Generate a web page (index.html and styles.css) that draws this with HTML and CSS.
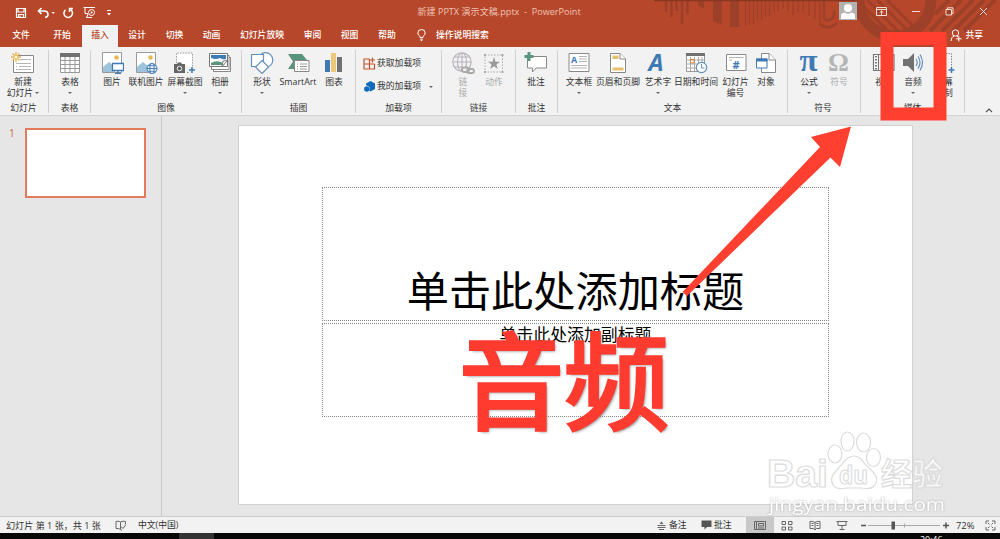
FILE: index.html
```
<!DOCTYPE html>
<html lang="zh-CN">
<head>
<meta charset="utf-8">
<title>新建 PPTX 演示文稿.pptx - PowerPoint</title>
<link rel="stylesheet" href="styles.css">
</head>
<body>
<div class="app">
  <header class="header">
    <svg class="header-art" width="350" height="47" viewBox="0 0 350 47" fill="none" stroke="#9c4029">
      <path d="M16 0V12M21.500 0V17M26.500 0V11M32 0V24M37.500 0V14" stroke-width="2.500"/>
      <path d="M48 0V5L54 9V0ZM63 0V21L72 25V0ZM80 0V27H89V0Z" fill="#9c4029" stroke="none"/>
      <path d="M95.500 0V26M99.500 0V25M103.500 0V24M107.500 0V21M111.500 0V20M115.500 0V17M119.500 0V16M124 0V13M128 0V11M133 0V9M138 0V11M143 0V15M148 0V13M153 0V12M159 0V16M165 0V19M170 2V26" stroke-width="1.300"/>
      <path d="M174 0V17Q174 21 179 20Q186 18 184 10M170 24Q178 31 187 23" stroke-width="2.500"/>
      <circle cx="245" cy="0" r="36" stroke-width="11"/>
      <path d="M207 0L242 35M217 0L253 36M227 0L258 31M237 0L264 27" stroke-width="3"/>
      <path d="M299 0L285 14M311 0L280 31M323 0L292 31M334 0L303 31M345 0L314 31" stroke-width="4"/>
      <path d="M4 0H205V1.200H4Z" fill="#873722" stroke="none"/>
    </svg>
    <div class="titlebar">
      <div class="quick">
        <svg width="12" height="12" viewBox="0 0 12 12" fill="none" stroke="#fff" stroke-width="1.200"><path d="M1.500 1.500H10.500V10.500H1.500ZM3 1.500V5H9V1.500M3.500 10.500V7.500H8.500V10.500M5 8.500V10"/></svg>
        <svg width="18" height="12" viewBox="0 0 18 12" fill="none" stroke="#fff" stroke-width="1.600"><path d="M4.500 1L1.500 4L4.500 7M1.500 4H7Q11 4 11 7.500Q11 10 8 10.500"/><path d="M14.500 5H18L16.250 7Z" fill="#fff" stroke="none"/></svg>
        <svg width="12" height="12" viewBox="0 0 12 12" fill="none" stroke="#fff" stroke-width="1.500"><path d="M3.500 2.800A4.300 4.300 0 1 0 8.500 2.500M7.500 5V1.500H11"/></svg>
        <svg width="13" height="13" viewBox="0 0 13 13" fill="none" stroke="#fff"><path d="M.5 1.500H12M2 1.500V7.500H5M5 8L3.500 12M3 11.500H9"/><circle cx="8.500" cy="6.500" r="3"/><path d="M7.800 5L10 6.500L7.800 8Z" fill="#fff" stroke="none"/></svg>
        <svg width="6" height="6" viewBox="0 0 6 6" fill="#fff"><path d="M1 0H5V1H1ZM1 3H5L3 5.500Z"/></svg>
      </div>
      <div class="doc-title">新建 PPTX 演示文稿.pptx &nbsp;- &nbsp;PowerPoint</div>
      <div class="window-tools">
        <svg class="avatar" width="18" height="18" viewBox="0 0 18 18"><path fill="#b3b3b3" d="M0 0H18V18H0Z"/><circle cx="9" cy="6" r="4" fill="#fff"/><path d="M2 17V14Q2 11 5.500 10.500Q9 13 12.500 10.500Q16 11 16 14V17Z" fill="#fff"/></svg>
        <svg class="opts" width="11" height="9" viewBox="0 0 11 9" fill="none" stroke="#f5dcd4"><path d="M.5 .5H10.500V8.500H.5ZM.5 2.500H10.500M5.500 8V4M3.800 5.500L5.500 4L7.200 5.500"/></svg>
        <svg class="min" width="8" height="9" viewBox="0 0 8 9" stroke="#f5dcd4"><path d="M0 4.500H8"/></svg>
        <svg class="restore" width="9" height="9" viewBox="0 0 9 9" fill="none" stroke="#f5dcd4"><path d="M1 2.500H6.500V8H1ZM2.500 2.500V.8H8V6.500H6.500"/></svg>
        <svg class="close" width="9" height="9" viewBox="0 0 9 9" stroke="#f5dcd4"><path d="M1 1L8 8M8 1L1 8"/></svg>
      </div>
    </div>
    <nav class="tabs">
      <span class="tab w42">文件</span><span class="tab w40">开始</span><span class="tab w36 active">插入</span><span class="tab w38">设计</span><span class="tab w37">切换</span><span class="tab w37">动画</span><span class="tab w64">幻灯片放映</span><span class="tab w37">审阅</span><span class="tab w37">视图</span><span class="tab w38">帮助</span>
      <span class="search"><svg width="9" height="12" viewBox="0 0 9 12" fill="none" stroke="#fff"><path d="M3 8.500V7.500Q.8 6 .8 4A3.700 3.500 0 0 1 8.200 4Q8.200 6 6 7.500V8.500ZM3.200 10.200H5.800M3.700 11.500H5.300"/></svg>操作说明搜索</span>
      <span class="share"><svg width="12" height="13" viewBox="0 0 12 13" fill="none" stroke="#fff"><circle cx="5.500" cy="4" r="3.200"/><path d="M1 12Q1 8 4 7M7 7L8 8M6 9.800H11.500M8.800 7V12.500"/></svg>共享</span>
    </nav>
  </header>

  <section class="ribbon">
    <div class="group g-slides">
      <div class="items">
        <div class="item w38"><svg width="24" height="22" viewBox="0 0 24 22" fill="none"><path d="M4.500 3.500H22.500V20.500H2.500V8" fill="#fff" stroke="#888"/><path d="M9 7.500H20M5 11.500H20M5 14.500H6M8 14.500H20M5 17.500H20" stroke="#b5b5b5"/><path d="M5 0V10M0 5H10M1.500 1.500L8.500 8.500M8.500 1.500L1.500 8.500" stroke="#e8b652" stroke-width="1.400"/><circle cx="5" cy="5" r="2" fill="#fff" stroke="#e8b652"/></svg><span>新建<br>幻灯片 <i class="caret"></i></span></div>
      </div><div class="label">幻灯片</div>
    </div>
    <div class="group g-table">
      <div class="items">
        <div class="item w38"><svg width="22" height="22" viewBox="0 0 22 22" fill="none"><path d="M1.500 2H20.500V20.500H1.500Z" fill="#fff" stroke="#999"/><path d="M1 1H21V5H1Z" fill="#717171"/><path d="M6 5V20M11 5V20M16 5V20M1 8.500H21M1 12.500H21M1 16.500H21" stroke="#999"/></svg><span>表格</span><i class="caret"></i></div>
      </div><div class="label">表格</div>
    </div>
    <div class="group g-image">
      <div class="items">
        <div class="item w30"><svg width="24" height="22" viewBox="0 0 24 22"><path d="M2.500 .5H21.500V20.500H2.500Z" fill="#fff" stroke="#999"/><path d="M3 20V15L9 10L15 15V20Z" fill="#9cc4dc"/><circle cx="16.500" cy="5.500" r="2.200" fill="#e8b652"/><path d="M12.500 11.500H23.500V18.500H12.500ZM18 19V21.500M15 21.500H21" fill="#fff" stroke="#3f7ab5" stroke-width="1.300"/></svg><span>图片</span></div>
        <div class="item w38"><svg width="24" height="22" viewBox="0 0 24 22"><path d="M2.500 .5H21.500V20.500H2.500Z" fill="#fff" stroke="#999"/><path d="M3 20V15L9 10L15 15V20Z" fill="#9cc4dc"/><circle cx="16.500" cy="5.500" r="2.200" fill="#e8b652"/><g fill="#fff" stroke="#3f7ab5"><circle cx="18" cy="16.500" r="5"/><ellipse cx="18" cy="16.500" rx="2.200" ry="5"/><path d="M13 16.500H23M14 13.800H22M14 19.200H22"/></g></svg><span>联机图片</span></div>
        <div class="item w40"><svg width="24" height="22" viewBox="0 0 24 22"><path d="M3.500 11V1H19.500V15M14 20.500H16" fill="#fff" stroke="#999" stroke-dasharray="1.500 1.200"/><path d="M1 12H4L5 10.500H8L9 12H12V21H1Z" fill="#666"/><circle cx="6.500" cy="16.500" r="2.300" fill="#666" stroke="#eee"/><path d="M19 15V21M16 18H22" stroke="#3f7ab5" stroke-width="1.500"/></svg><span>屏幕截图</span><i class="caret"></i></div>
        <div class="item w30"><svg width="24" height="22" viewBox="0 0 24 22"><path d="M5.500 5.500H22.500V19.500H5.500Z" fill="#fff" stroke="#888"/><path d="M3.500 3.500H21V17.500H3.500Z" fill="#fff" stroke="#888"/><path d="M1.500 1.500H19.500V14.500H1.500Z" fill="#fff" stroke="#777"/><path d="M3 3H18V7Q15 8 12 6Q8 8 3 6Z" fill="#3f7ab5"/><path d="M3 13V11Q8 8 13 10L17 13Z" fill="#59957d"/><path d="M14 14.500L15 9L19.500 8.500Z" fill="#fff" stroke="#777"/></svg><span>相册</span><i class="caret"></i></div>
      </div><div class="label">图像</div>
    </div>
    <div class="group g-illus">
      <div class="items">
        <div class="item w32"><svg width="24" height="22" viewBox="0 0 24 22" fill="#fff" stroke="#6790bd" stroke-width="1.200"><circle cx="15.500" cy="8" r="7.300"/><path d="M1.500 2.500H13.500V14.500H1.500Z"/><path d="M12 8.500L18.500 15L12 21.500L5.500 15Z"/></svg><span>形状</span><i class="caret"></i></div>
        <div class="item w40"><svg width="24" height="22" viewBox="0 0 24 22"><path d="M2 2H16L21 8V10H9V17H2L7 9.500Z" fill="#59957d"/><path d="M8.500 8.500H23V19.500H8.500Z" fill="#fff" stroke="#888"/><path d="M11 12H12M14 12H21M11 14.500H12M14 14.500H21M11 17H12M14 17H21" stroke="#999"/></svg><span>SmartArt</span></div>
        <div class="item w32"><svg width="22" height="22" viewBox="0 0 22 22"><path d="M2 8H7V20H2Z" fill="#3f7ab5"/><path d="M8 1H13V20H8Z" fill="#edc87a"/><path d="M14 5H19V20H14Z" fill="#717171"/></svg><span>图表</span></div>
      </div><div class="label">插图</div>
    </div>
    <div class="group g-addins">
      <div class="items column">
        <div class="row"><svg width="13" height="13" viewBox="0 0 13 13" fill="none" stroke="#c4532e" stroke-width="1.200"><path d="M6.500 2H1V12H11.500V7M1 7H11.500M6.500 2V12M9.500 .5V5.500M7 3H12"/></svg>获取加载项</div>
        <div class="row"><svg width="13" height="13" viewBox="0 0 13 13" fill="#0f6cbd"><path d="M7.500 1L12 3.500V9L7.500 11.500L6.500 11V7L3 5V3.500Z"/><circle cx="3.800" cy="9" r="2.700"/></svg>我的加载项<i class="caret"></i></div>
      </div><div class="label">加载项</div>
    </div>
    <div class="group g-link muted">
      <div class="items">
        <div class="item w30"><svg width="24" height="22" viewBox="0 0 24 22" fill="none" stroke="#b9b2bd" stroke-width="1.100"><circle cx="11" cy="10" r="9.200"/><ellipse cx="11" cy="10" rx="4.500" ry="9.200"/><path d="M2 10H20M3.500 5H18.500M3.500 15H12M11 1V19"/><g stroke="#aaa" stroke-width="1.800"><rect x="11" y="15.500" width="7" height="4.500" rx="2.200" fill="#f2f2f2"/><rect x="16" y="17" width="7" height="4" rx="2"/></g></svg><span>链<br>接</span></div>
        <div class="item w32"><svg width="24" height="22" viewBox="0 0 24 22"><path d="M3 3H20.500V20H3Z" fill="none" stroke="#aaa" stroke-dasharray="1.500 1.500"/><path d="M2 2H4V4H2ZM19.500 2H21.500V4H19.500ZM2 19H4V21H2ZM19.500 19H21.500V21H19.500Z" fill="#aaa"/><path d="M12 5L13.500 9.700H18L14.400 12.500L15.800 17L12 14.300L8.200 17L9.600 12.500L6 9.700H10.500Z" fill="#999"/></svg><span>动作</span></div>
      </div><div class="label">链接</div>
    </div>
    <div class="group g-comment">
      <div class="items">
        <div class="item w38"><svg width="24" height="22" viewBox="0 0 24 22"><path d="M3.500 4.500H22.500V16H12L8.500 20V16H3.500Z" fill="#fff" stroke="#888"/><path d="M5 0V9M.5 4.500H9.500" stroke="#59957d" stroke-width="3"/></svg><span>批注</span></div>
      </div><div class="label">批注</div>
    </div>
    <div class="group g-text">
      <div class="items">
        <div class="item w32"><svg width="22" height="22" viewBox="0 0 22 22"><path d="M1 1.500H21V19.500H1Z" fill="#fff" stroke="#888"/><text x="3" y="11" class="glyph-a">A</text><path d="M11 4.500H19M11 7H19M11 9.500H19M3 13.500H19M3 16H19" stroke="#b5b5b5"/></svg><span>文本框</span><i class="caret"></i></div>
        <div class="item w46"><svg width="22" height="22" viewBox="0 0 22 22"><path d="M3.500 1.500H13L18.500 7V20.500H3.500Z" fill="#fff" stroke="#888"/><path d="M13 1.500V7H18.500" fill="#fff" stroke="#888"/><path d="M5.500 3.500H11.500V7H5.500ZM5.500 15.500H16.500V18.500H5.500Z" fill="#e8c06c"/></svg><span>页眉和页脚</span></div>
        <div class="item w34"><svg class="open" width="22" height="22" viewBox="0 0 22 22"><text x="9" y="19" text-anchor="middle" class="glyph-art">A</text></svg><span>艺术字</span><i class="caret"></i></div>
        <div class="item w42"><svg width="24" height="22" viewBox="0 0 24 22" fill="none"><path d="M2.500 2H20.500V19.500H2.500Z" fill="#fff" stroke="#999"/><path d="M2 1H21V4H2Z" fill="#717171"/><path d="M6.500 5V19M10.500 5V19M14.500 5V19M18 5V12M2 8H20M2 12H20M2 16H14" stroke="#aaa"/><path d="M6.500 7.500H10V11H6.500Z" stroke="#d98239"/><circle cx="17.500" cy="15.500" r="5.200" fill="#fff" stroke="#6790bd" stroke-width="1.200"/><path d="M17.500 12V16H20.500" stroke="#6790bd"/></svg><span>日期和时间</span></div>
        <div class="item w37"><svg width="22" height="22" viewBox="0 0 22 22"><path d="M1.500 2.500H21V18.500H1.500Z" fill="#fff" stroke="#888"/><path d="M4 5.500H18.500M4 8H7" stroke="#b5b5b5"/><text x="7.500" y="17" class="glyph-a hash">#</text></svg><span>幻灯片<br>编号</span></div>
        <div class="item w24"><svg width="22" height="22" viewBox="0 0 22 22" fill="#fff"><path d="M6.500 1.500H14L20.500 8V20.500H6.500Z" stroke="#888"/><path d="M14 1.500V8H20.500" stroke="#888"/><path d="M1.500 7H12V16H1.500Z" stroke="#3f7ab5"/><path d="M1 6.500H12.500V9.500H1Z" fill="#3f7ab5"/></svg><span>对象</span></div>
      </div><div class="label">文本</div>
    </div>
    <div class="group g-symbol">
      <div class="items">
        <div class="item w30"><svg class="open" width="22" height="22" viewBox="0 0 22 22"><text x="10.500" y="18.500" text-anchor="middle" class="glyph-pi" textLength="18" lengthAdjust="spacingAndGlyphs">π</text></svg><span>公式</span><i class="caret"></i></div>
        <div class="item w30 muted"><svg class="open" width="22" height="22" viewBox="0 0 22 22"><text x="10.500" y="19" text-anchor="middle" class="glyph-omega">Ω</text></svg><span>符号</span></div>
      </div><div class="label">符号</div>
    </div>
    <div class="group g-media">
      <div class="items">
        <div class="item w30"><svg width="24" height="22" viewBox="0 0 24 22"><path d="M1.500 2.500H22V18.500H1.500ZM6.500 2V19" fill="#fff" stroke="#777" stroke-width="1.200"/><path d="M4 4V18" stroke="#777" stroke-width="2" stroke-dasharray="1.500 1.500"/></svg><span>视频</span></div>
        <div class="item w28"><svg width="22" height="22" viewBox="0 0 22 22" fill="none"><path d="M1 7H6L12 1V20L6 14H1Z" fill="#717171"/><path d="M14 7Q16.500 10.500 14 14M16 4.500Q20 10.500 16 16.500M18 2.500Q23 10.500 18 18.500" stroke="#6790bd" stroke-width="1.200"/></svg><span>音频</span><i class="caret"></i></div>
        <div class="item w34"><svg width="22" height="22" viewBox="0 0 22 22"><path d="M2 1.500H18.500V15M2 16H5" fill="none" stroke="#888" stroke-dasharray="1.500 1.200"/><path d="M18.500 15V21M15.500 18H21.500" stroke="#3f7ab5" stroke-width="1.500"/></svg><span>屏幕<br>录制</span></div>
      </div><div class="label">媒体</div>
    </div>
    <svg class="collapse" width="8" height="6" viewBox="0 0 8 6" fill="none" stroke="#555" stroke-width="1.200"><path d="M1 5L4 2L7 5"/></svg>
  </section>

  <main class="workspace">
    <aside class="thumbs"><span class="thumb-no">1</span><div class="thumb"></div></aside>
    <section class="stage">
      <div class="slide">
        <div class="placeholder title">单击此处添加标题</div>
        <div class="placeholder subtitle">单击此处添加副标题</div>
      </div>
    </section>
  </main>

  <footer class="status">
    <span class="count">幻灯片 第 1 张，共 1 张</span>
    <svg width="12" height="11" viewBox="0 0 12 11" fill="none" stroke="#666"><path d="M5.500 9.500V2Q3 .5 1 1.500V8.500Q4 8 5.500 9.500L7 10.500M5.500 2Q8 .5 10.500 1.500V4M6 6.500L8 8.500L11 4.500"/></svg>
    <span class="lang">中文(中国)</span>
    <span class="notes"><svg width="9" height="10" viewBox="0 0 9 10" stroke="#666"><path d="M2.500 4L4.500 1.500L6.500 4Z" fill="#666" stroke="none"/><path d="M.5 5.500H8.500M.5 7.500H8.500M2 9.500H7"/></svg>备注</span>
    <span class="comments"><svg width="11" height="10" viewBox="0 0 11 10" fill="#555"><path d="M.5 .5H10.500V7H6L3.500 9.500V7H.5Z"/></svg>批注</span>
    <span class="view on"><svg width="12" height="11" viewBox="0 0 12 11" fill="none" stroke="#666"><path d="M.5 1.500H11.500V9.500H.5ZM2.500 1.500V9.500M4.500 3.500H9.500V6H4.500ZM4 8H10"/></svg></span>
    <span class="view"><svg width="12" height="11" viewBox="0 0 12 11" fill="none" stroke="#666"><path d="M1 1.500H4.500V4.500H1ZM7.500 1.500H11V4.500H7.500ZM1 7H4.500V10H1ZM7.500 7H11V10H7.500Z"/></svg></span>
    <span class="view"><svg width="12" height="11" viewBox="0 0 12 11" fill="none" stroke="#666"><path d="M6 2.500Q3.500 .8 1 1.500V8.500H4.500L6 10L7.500 8.500H11V1.500Q8.500 .8 6 2.500V10M2.500 3.500H4.500M2.500 5.500H4.500M7.500 3.500H9.500M7.500 5.500H9.500"/></svg></span>
    <span class="view"><svg width="12" height="11" viewBox="0 0 12 11" fill="none" stroke="#666"><path d="M.5 1.500H11.500M2 1.500V5.500H10V1.500M6 5.500V9.500M3.500 9.500H8.500"/></svg></span>
    <svg class="zoom" width="90" height="11" viewBox="0 0 90 11" stroke="#555"><path d="M2 5.500H7M84 5.500H90M87 2.500V8.500" stroke-width="1.500"/><path d="M9 5.500H81M45.500 3.500V7.500" stroke="#aaa"/><path d="M32.500 1.500H36V9.500H32.500Z" fill="#555" stroke="none"/></svg>
    <span class="pct">72%</span>
    <svg class="fit" width="11" height="11" viewBox="0 0 11 11" fill="none" stroke="#666"><path d="M1 4V1H4M7 1H10V4M10 7V10H7M4 10H1V7M3 3L4.500 4.500M8 3L6.500 4.500M3 8L4.500 6.500M8 8L6.500 6.500"/></svg>
  </footer>
  <div class="taskbar"><div class="task"></div><span class="clock">20:46</span></div>

  <svg class="watermark" width="190" height="95" viewBox="760 425 190 95">
    <g fill="#fff" fill-opacity=".75" stroke="#dcdcdc" stroke-width="1.200">
      <text x="767" y="487" class="wm-latin" textLength="61" lengthAdjust="spacingAndGlyphs">Bai</text>
      <ellipse cx="835" cy="454" rx="7" ry="9"/><ellipse cx="847.500" cy="441.500" rx="6.500" ry="9.500"/><ellipse cx="863.500" cy="442.500" rx="7" ry="9.500"/><ellipse cx="873.500" cy="457.500" rx="7" ry="9"/>
      <path d="M854 456Q860 456 864 463L873 472Q880 480 874 486Q870 490 862 488H846Q836 490 833 485Q829 478 836 471L843 463Q848 456 854 456Z"/>
      <text x="839" y="484" class="wm-du" textLength="29" lengthAdjust="spacingAndGlyphs">du</text>
      <text x="881" y="485" class="wm-cn" textLength="62">经验</text>
    </g>
    <text x="769" y="511" class="wm-url" textLength="176" lengthAdjust="spacingAndGlyphs">jingyan.baidu.com</text>
  </svg>
  <div class="callout">音频</div>
  <svg class="marks" width="270" height="270" viewBox="680 30 270 270"><path d="M887 38.500H940V114H887Z" fill="none" stroke="#ff3f2f" stroke-width="13"/><path d="M682.500 292L820 147L811 137L851 126.500L840 167L830.500 157.500L687 296Z" fill="#ff3f2f"/></svg>
</div>
</body>
</html>
```

FILE: styles.css
```
* { box-sizing: border-box; }
body { margin: 0; }
svg { display: block; flex: none; }
.app {
  position: relative; width: 1000px; height: 539px; overflow: hidden;
  display: flex; flex-direction: column;
  background: #e6e6e6; color: #333;
  font: 8.8px/11px "Open Sans", "Noto Sans CJK SC", sans-serif;
  white-space: nowrap;
}

/* header */
.header { position: relative; height: 47px; flex: none; background: #b7472a; color: #fff; }
.header-art { position: absolute; top: 0; right: 0; }
.titlebar { position: relative; height: 25px; display: grid; grid-template-columns: 400px 198px 402px; align-items: center; }
.quick { display: flex; align-items: center; padding-left: 15px; gap: 9px; }
.quick svg:nth-child(2) { margin-left: 1px; }
.quick svg:nth-child(3) { margin-left: -2px; }
.quick svg:nth-child(5) { margin-left: 1px; }
.doc-title { text-align: center; color: #efc3b6; padding-bottom: 3px; font-size: 9.100px; }
.window-tools { display: flex; align-items: center; height: 22px; align-self: start; padding-left: 241px; }
.opts { margin-left: 19px; }
.min { margin-left: 25px; }
.restore { margin-left: 25px; }
.close { margin-left: 25px; }
.tabs { position: relative; height: 22px; display: flex; line-height: 20px; font-weight: 500; }
.tab { text-align: center; }
.active { background: #f2f2f2; color: #b7472a; }
.search { display: flex; align-items: center; gap: 10px; padding-left: 11px; height: 20px; }
.share { display: flex; align-items: center; gap: 3px; height: 20px; margin-left: auto; padding-right: 17px; }

/* ribbon */
.ribbon { height: 69px; flex: none; display: flex; background: #f2f2f2; border-bottom: 1px solid #d2d2d2; padding-top: 3px; }
.group { height: 63px; display: flex; flex-direction: column; border-right: 1px solid #cfcfcf; }
.items { height: 52px; flex: none; display: flex; }
.label { text-align: center; line-height: 13px; flex: none; }
.item { display: flex; flex-direction: column; align-items: center; padding-top: 2px; text-align: center; }
.item svg { margin-bottom: 3px; }
.open { overflow: visible; }
.caret { border: 2px solid transparent; border-top-color: #666; border-bottom: 0; display: inline-block; vertical-align: 2px; }
.item > .caret { margin-top: 4px; }
.muted { color: #aaa; }
.muted .label { color: #444; }
.w24 { width: 24px; } .w28 { width: 28px; } .w30 { width: 30px; } .w32 { width: 32px; }
.w34 { width: 34px; } .w36 { width: 36px; } .w37 { width: 37px; } .w38 { width: 38px; }
.w40 { width: 40px; } .w42 { width: 42px; } .w46 { width: 46px; } .w64 { width: 64px; }
.g-slides { width: 49px; padding-left: 4px; } .g-slides .label { padding-right: 5px; }
.g-table { width: 42px; } .g-table .items { padding-left: 2px; }
.g-image { width: 151px; } .g-image .items { padding-left: 6px; }
.g-illus { width: 114px; } .g-illus .items { padding-left: 4px; }
.g-addins { width: 86px; }
.g-link { width: 74px; } .g-link .items { padding-left: 6px; }
.g-comment { width: 42px; } .g-comment .items { padding-left: 1px; }
.g-text { width: 230px; } .g-text .items { padding-left: 5px; }
.g-symbol { width: 73px; padding-right: 2px; } .g-symbol .items { padding-left: 6px; }
.g-media { width: 104px; } .g-media .items { padding-left: 8px; }
.g-addins .column { flex-direction: column; padding: 7px 0 0 7px; gap: 10px; }
.row { display: flex; align-items: center; gap: 1px; height: 13px; }
.row .caret { margin-left: 7px; }
.collapse { margin: 57px 0 0 20px; }
.glyph-a { font: bold 9px "Open Sans", sans-serif; fill: #3f7ab5; }
.hash { font-size: 11px; }
.glyph-art { font: italic bold 24px/22px "Open Sans", sans-serif; fill: #3f7ab5; }
.glyph-pi { font: bold 31px/22px "Liberation Serif", serif; fill: #3f7ab5; }
.glyph-omega { font: bold 26px/22px "Liberation Serif", serif; fill: #b5b5b5; }

/* workspace */
.workspace { flex: 1; display: flex; border-bottom: 1px solid #cfcfcf; }
.thumbs { width: 162px; display: flex; padding: 12px 0 0 9px; border-right: 1px solid #c9c9c9; }
.thumb-no { width: 16px; color: #c9654a; font-size: 10px; line-height: 11px; }
.thumb { width: 121px; height: 70px; border: 2px solid #e27a5c; background: #fff; }
.stage { flex: 1; padding: 9px 0 0 76px; }
.slide { width: 675px; height: 380px; background: #fff; border: 1px solid #d2d2d2; padding: 61px 83px; color: #000; }
.placeholder { width: 507px; border: 1px dotted #888; text-align: center; }
.title { height: 134px; padding-top: 72px; font-size: 42.200px; line-height: 62px; }
.subtitle { height: 94px; margin-top: 2px; font-size: 16.900px; line-height: 22px; }

/* status bar */
.status { height: 16px; flex: none; display: flex; align-items: center; background: #f2f2f2; padding-left: 6px; }
.count { width: 109px; font-size: 9.100px; }
.lang { margin-left: 11px; }
.notes { margin-left: auto; display: flex; align-items: center; gap: 3px; width: 44px; }
.comments { display: flex; align-items: center; gap: 2px; width: 45px; }
.view { width: 27.500px; height: 16px; display: flex; align-items: center; justify-content: center; }
.on { background: #c8c8c8; }
.zoom { margin-left: 3px; }
.pct { margin-left: 7px; width: 29px; font-size: 9.400px; }
.fit { margin-right: 4px; }
.taskbar { height: 6px; flex: none; overflow: hidden; background: #080808; display: flex; }
.task { width: 35px; margin-left: 179px; background: #333; }
.clock { color: #fff; margin-left: 706px; padding-top: 2px; }

/* overlays */
.watermark { position: absolute; left: 760px; top: 425px; }
.wm-latin { font: bold 38px "Liberation Sans", sans-serif; }
.wm-du { font: bold 25px "Open Sans", sans-serif; }
.wm-cn { font: bold 31px "Noto Sans CJK SC", sans-serif; }
.wm-url { font: 19px "Open Sans", sans-serif; fill: #fff; filter: drop-shadow(0 0 1px #aaa); }
.callout {
  position: absolute; left: 459px; top: 315px; color: #ff3b2f;
  font: 105px/120px "Noto Sans CJK SC", sans-serif;
  -webkit-text-stroke: 3.500px #ff3b2f;
  text-shadow: 2px 2px 3px #888;
}
.marks { position: absolute; left: 680px; top: 30px; }
```
